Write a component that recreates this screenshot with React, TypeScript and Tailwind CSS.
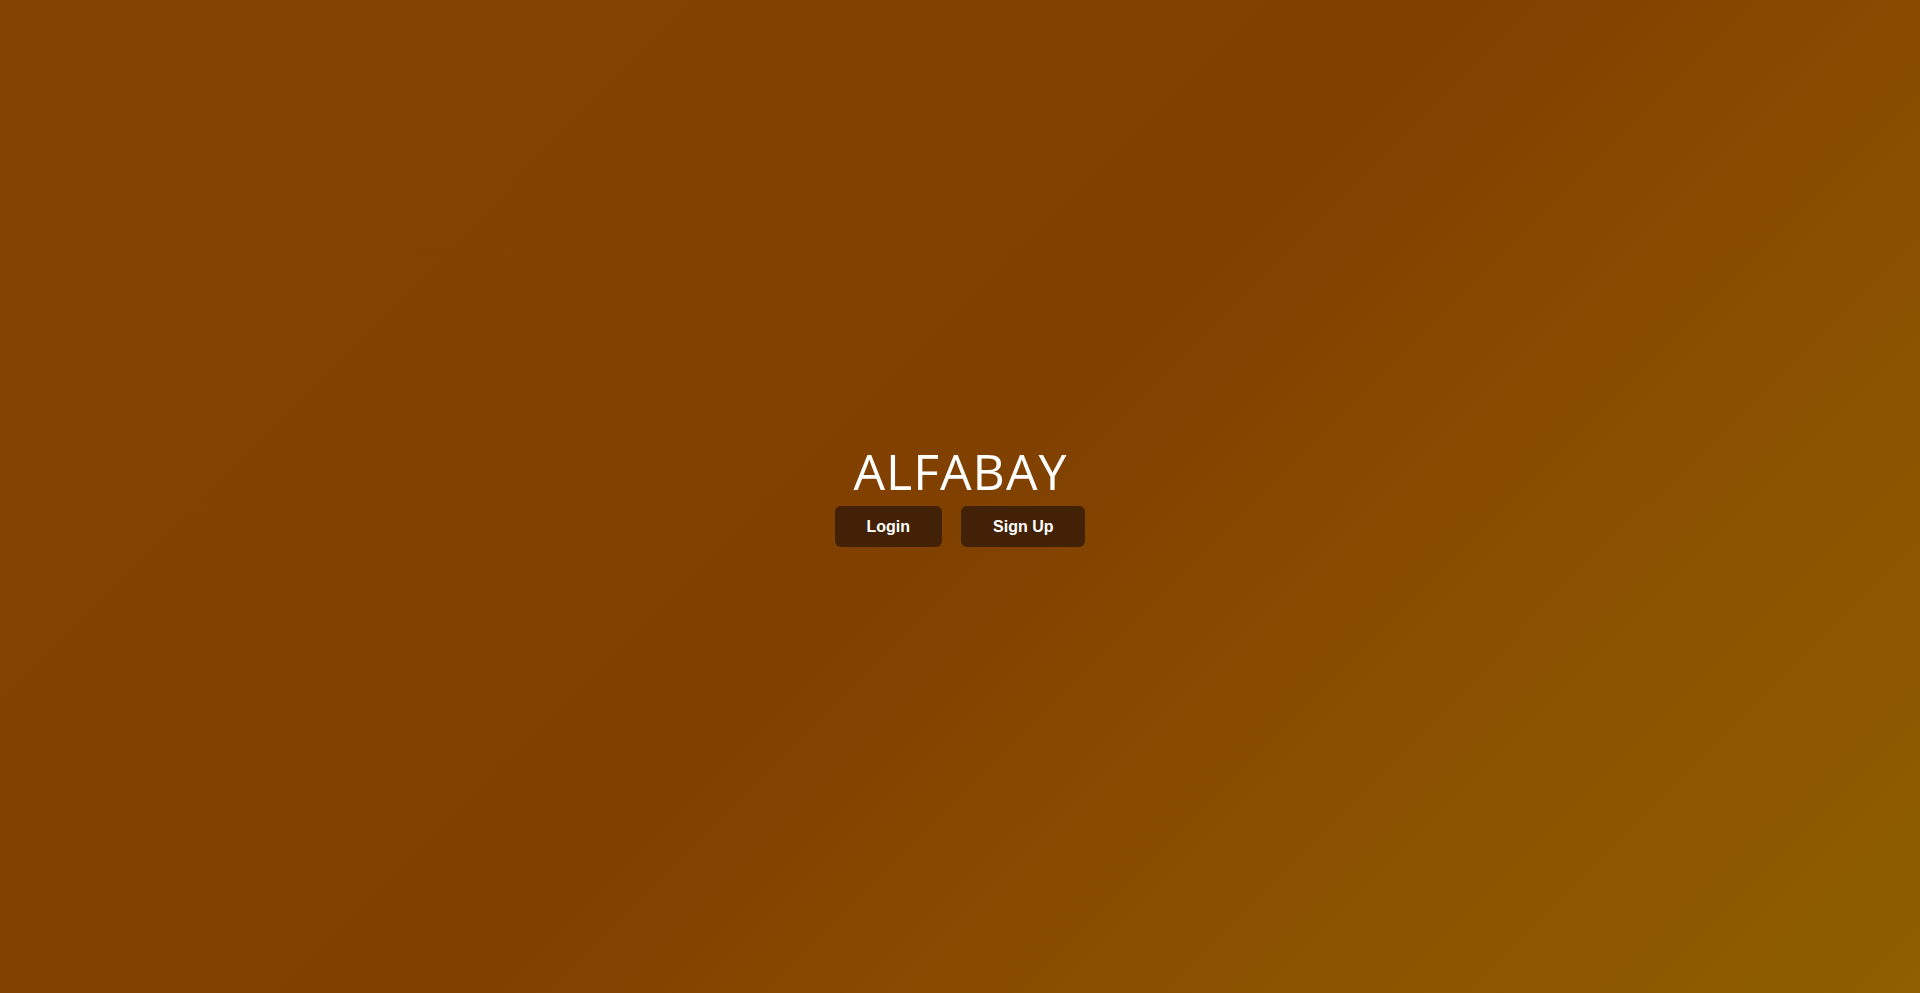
import React from "react";

export default function App() {
  return (
    <div className="flex h-screen w-full flex-col items-center justify-center bg-[linear-gradient(135deg,#844200_0%,#834100_40%,#804000_50%,#8a4e00_70%,#8f5f00_100%)]">
      <h1 className="mb-[10px] pl-[1px] text-[50px] font-normal leading-[50px] tracking-[1px] text-white [font-family:'Open_Sans','Noto_Sans',sans-serif]">
        ALFABAY
      </h1>
      <div className="flex gap-[19px]">
        <button className="h-[41px] rounded-[6px] bg-[#432106] px-8 text-[16px] font-bold text-white [font-family:'Liberation_Sans',Arial,sans-serif]">
          Login
        </button>
        <button className="h-[41px] rounded-[6px] bg-[#432106] px-8 text-[16px] font-bold text-white [font-family:'Liberation_Sans',Arial,sans-serif]">
          Sign Up
        </button>
      </div>
    </div>
  );
}
